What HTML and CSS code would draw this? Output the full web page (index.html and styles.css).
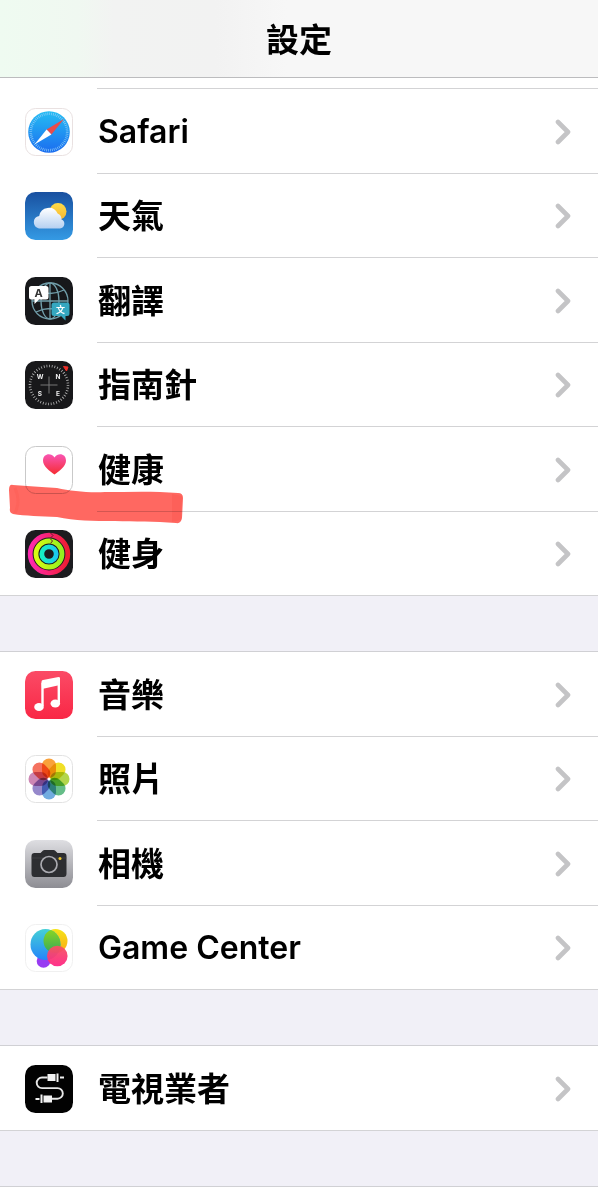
FILE: index.html
```html
<!DOCTYPE html>
<html lang="zh-Hant">
<head>
    <meta charset="UTF-8">
    <meta name="viewport" content="width=device-width, initial-scale=1.0">
    <title>設定</title>
    <link rel="stylesheet" href="styles.css">
</head>
<body>
    <svg class="defs" aria-hidden="true">
        <symbol id="chevron" viewBox="0 0 16 26">
            <path d="M3 3L13 13L3 23" fill="none" stroke="#c4c4c6" stroke-width="4.6" stroke-linecap="round" stroke-linejoin="round"/>
        </symbol>
    </svg>
    <header class="navbar">
        <h1>設定</h1>
    </header>
    <main>
        <div class="group scrolled">
            <div class="tail"></div>
            <ul>
                <li><a class="row" href="#safari">
                    <svg class="icon" viewBox="0 0 48 48" aria-hidden="true">
                        <defs><linearGradient id="safariBlue" x2="0" y2="1"><stop stop-color="#25bdf3"/><stop offset="1" stop-color="#1b6cf0"/></linearGradient></defs>
                        <rect x=".5" y=".5" width="47" height="47" rx="10" fill="#fff" stroke="#e9e1e1"/>
                        <circle cx="24" cy="24" r="20.8" fill="url(#safariBlue)"/>
                        <circle cx="24" cy="24" r="18.2" fill="none" stroke="#8dcdf7" stroke-width="2.6" stroke-dasharray=".7 1.2"/>
                        <path d="M39 11L26.4 26.4L21.6 21.6Z" fill="#e94b4b"/>
                        <path d="M9.5 36.5L26.4 26.4L21.6 21.6Z" fill="#fff"/>
                    </svg>
                    <span class="label latin">Safari</span>
                    <svg class="chevron" aria-hidden="true"><use href="#chevron"/></svg>
                </a></li>
                <li><a class="row" href="#weather">
                    <svg class="icon" viewBox="0 0 48 48" aria-hidden="true">
                        <defs>
                            <linearGradient id="sky" x2="0" y2="1"><stop stop-color="#1950a0"/><stop offset="1" stop-color="#349ae4"/></linearGradient>
                            <linearGradient id="cloud" x2="0" y2="1"><stop stop-color="#fff"/><stop offset="1" stop-color="#b5d0f1"/></linearGradient>
                            <linearGradient id="sun" x2="0" y2="1"><stop stop-color="#ffdc48"/><stop offset="1" stop-color="#f7b631"/></linearGradient>
                        </defs>
                        <rect width="48" height="48" rx="10.5" fill="url(#sky)"/>
                        <circle cx="33" cy="19.5" r="8.5" fill="url(#sun)"/>
                        <path d="M14 36.5a6.4 6.4 0 0 1 .2-12.6a9.7 9.7 0 0 1 18.4-2.3a6.2 6.2 0 0 1 3.9 5.9a4.7 4.7 0 0 1-1.5 9Z" fill="url(#cloud)"/>
                    </svg>
                    <span class="label">天氣</span>
                    <svg class="chevron" aria-hidden="true"><use href="#chevron"/></svg>
                </a></li>
                <li><a class="row" href="#translate">
                    <svg class="icon" viewBox="0 0 48 48" aria-hidden="true">
                        <rect width="48" height="48" rx="10.5" fill="#17181b"/>
                        <g fill="none" stroke="#709da9" stroke-width="1.3">
                            <circle cx="25" cy="24" r="18"/>
                            <ellipse cx="25" cy="24" rx="9" ry="18"/>
                            <path d="M25 6V42M7 24H43M11 13Q25 20 39 13M11 35Q25 28 39 35"/>
                        </g>
                        <path d="M6.5 9H21a2.500 2.500 0 0 1 2.500 2.500V20a2.500 2.500 0 0 1-2.500 2.500H14L9.500 27V22.500H6.500A2.500 2.500 0 0 1 4 20V11.500A2.500 2.500 0 0 1 6.500 9Z" fill="#fff"/>
                        <path d="M29 25.500H42a2.500 2.500 0 0 1 2.500 2.500V36.500a2.500 2.500 0 0 1-2.500 2.500H40.500V43.500L36 39H29a2.500 2.500 0 0 1-2.500-2.500V28a2.500 2.500 0 0 1 2.500-2.500Z" fill="#35a7c0"/>
                        <text class="glyph" x="13.5" y="19.8" font-size="11" fill="#333">A</text>
                        <text class="glyph" x="35.5" y="35.8" font-size="9" fill="#fff">文</text>
                    </svg>
                    <span class="label">翻譯</span>
                    <svg class="chevron" aria-hidden="true"><use href="#chevron"/></svg>
                </a></li>
                <li><a class="row" href="#compass">
                    <svg class="icon" viewBox="0 0 48 48" aria-hidden="true">
                        <rect width="48" height="48" rx="10.5" fill="#18181a"/>
                        <circle cx="24" cy="24" r="19" fill="none" stroke="#b5b5b5" stroke-width="2.6" stroke-dasharray=".8 1.9"/>
                        <path d="M24 15.5V32.5M15.5 24H32.5" stroke="#777" stroke-width="1"/>
                        <path d="M38.5 5.5L43 6L41.5 10Z" fill="#f02e28" stroke="#f02e28"/>
                        <g class="glyph" font-size="6.5" fill="#eee">
                            <text x="15" y="17.5">W</text><text x="33" y="17.5">N</text>
                            <text x="15" y="35">S</text><text x="33" y="35">E</text>
                        </g>
                    </svg>
                    <span class="label">指南針</span>
                    <svg class="chevron" aria-hidden="true"><use href="#chevron"/></svg>
                </a></li>
                <li><a class="row" href="#health">
                    <svg class="icon" viewBox="0 0 48 48" aria-hidden="true">
                        <defs><linearGradient id="heart" x2="0" y2="1"><stop stop-color="#f955b3"/><stop offset="1" stop-color="#f62c32"/></linearGradient></defs>
                        <rect x=".5" y=".5" width="47" height="47" rx="10" fill="#fff" stroke="#c9c9c9"/>
                        <path d="M29.5 28.5C25 25 18 20.5 18 14.700C18 7.5 26 6.3 29.5 11.4C33 6.3 41 7.5 41 14.7C41 20.5 34 25 29.5 28.5Z" fill="url(#heart)"/>
                    </svg>
                    <span class="label">健康</span>
                    <svg class="chevron" aria-hidden="true"><use href="#chevron"/></svg>
                </a>
                    <svg class="marker" viewBox="0 0 174 42" aria-hidden="true">
                        <path d="M4 1C18 2 32 3 48 4C62 7 80 9 96 8C120 8 145 7 169 9Q174 9 174 14L173 34Q172 40 167 39C145 37 126 38 106 37C84 37 66 37 48 33C32 32 16 32 4 30Q0 29 1 24L0 6Q0 0 4 1Z" fill="#ff6861"/>
                        <path d="M163 10L173 12L172 36L163 38Z" fill="#f94e48" opacity=".3"/>
                        <path d="M6 4Q12 17 6 29" fill="none" stroke="#f94e48" stroke-width="3" opacity=".2"/>
                    </svg>
                </li>
                <li><a class="row" href="#fitness">
                    <svg class="icon" viewBox="0 0 48 48" aria-hidden="true">
                        <defs>
                            <linearGradient id="move"><stop stop-color="#ff28b0"/><stop offset="1" stop-color="#ee1d32"/></linearGradient>
                            <linearGradient id="exercise"><stop stop-color="#d8fb13"/><stop offset="1" stop-color="#93ef20"/></linearGradient>
                            <linearGradient id="stand"><stop stop-color="#16efc4"/><stop offset="1" stop-color="#1cc9ef"/></linearGradient>
                        </defs>
                        <rect width="48" height="48" rx="10.5" fill="#1c1c1f"/>
                        <g fill="none" stroke-width="4.8">
                            <circle cx="24" cy="24" r="18.8" stroke="url(#move)"/>
                            <circle cx="24" cy="24" r="13" stroke="url(#exercise)"/>
                            <circle cx="24" cy="24" r="7.2" stroke="url(#stand)"/>
                        </g>
                        <path d="M25.5 3L28 5.5L25.5 8M25.5 9L27.5 11L25.5 13.5" fill="none" stroke="#641a2a"/>
                    </svg>
                    <span class="label">健身</span>
                    <svg class="chevron" aria-hidden="true"><use href="#chevron"/></svg>
                </a></li>
            </ul>
        </div>
        <div class="group">
            <ul>
                <li><a class="row" href="#music">
                    <svg class="icon" viewBox="0 0 48 48" aria-hidden="true">
                        <defs><linearGradient id="music" x2="0" y2="1"><stop stop-color="#fb4b66"/><stop offset="1" stop-color="#f92745"/></linearGradient></defs>
                        <rect width="48" height="48" rx="10.5" fill="url(#music)"/>
                        <path d="M17.5 35V12.5L33.8 9V31.5" fill="none" stroke="#fff" stroke-width="2.4" stroke-linejoin="round"/>
                        <path d="M16.500 10.700Q16.500 9.300 18 9L33.500 6Q35 6 35 7V14L17 18Z" fill="#fff"/>
                        <ellipse cx="14" cy="36" rx="4.800" ry="4" fill="#fff"/>
                        <ellipse cx="30.300" cy="32.500" rx="4.800" ry="4" fill="#fff"/>
                    </svg>
                    <span class="label">音樂</span>
                    <svg class="chevron" aria-hidden="true"><use href="#chevron"/></svg>
                </a></li>
                <li><a class="row" href="#photos">
                    <svg class="icon" viewBox="0 0 48 48" aria-hidden="true">
                        <rect x=".5" y=".5" width="47" height="47" rx="10" fill="#fff" stroke="#e2e2e2"/>
                        <g class="petals">
                            <rect x="17" y="3.5" width="14" height="19.5" rx="7" fill="#f9a13a"/>
                            <rect x="17" y="3.5" width="14" height="19.5" rx="7" fill="#f0df27" transform="rotate(45 24 24)"/>
                            <rect x="17" y="3.5" width="14" height="19.5" rx="7" fill="#b3d64c" transform="rotate(90 24 24)"/>
                            <rect x="17" y="3.5" width="14" height="19.5" rx="7" fill="#65bd88" transform="rotate(135 24 24)"/>
                            <rect x="17" y="3.5" width="14" height="19.5" rx="7" fill="#72ace0" transform="rotate(180 24 24)"/>
                            <rect x="17" y="3.5" width="14" height="19.5" rx="7" fill="#9688cb" transform="rotate(225 24 24)"/>
                            <rect x="17" y="3.5" width="14" height="19.5" rx="7" fill="#cd86b4" transform="rotate(270 24 24)"/>
                            <rect x="17" y="3.5" width="14" height="19.5" rx="7" fill="#f47260" transform="rotate(315 24 24)"/>
                        </g>
                        <circle cx="24" cy="24" r="1.5" fill="#fff"/>
                    </svg>
                    <span class="label">照片</span>
                    <svg class="chevron" aria-hidden="true"><use href="#chevron"/></svg>
                </a></li>
                <li><a class="row" href="#camera">
                    <svg class="icon" viewBox="0 0 48 48" aria-hidden="true">
                        <defs><linearGradient id="metal" x2="0" y2="1"><stop stop-color="#dedee2"/><stop offset="1" stop-color="#8d8d93"/></linearGradient></defs>
                        <rect width="48" height="48" rx="10.5" fill="url(#metal)"/>
                        <path d="M9.5 13H15.5L18 10.5Q18.5 10 19.5 10H28.5Q29.5 10 30 10.5L32.5 13H38.5Q41.5 13 41.5 16V33.5Q41.5 37 38.5 37H9.5Q6.5 37 6.5 33.5V16Q6.5 13 9.5 13Z" fill="#2d2e31"/>
                        <path d="M6.5 18H41.5" stroke="#4b4c4f" stroke-width=".6"/>
                        <circle cx="24" cy="24.5" r="8" fill="#2d2e31" stroke="#aaaab0" stroke-width="1.7"/>
                        <circle cx="35" cy="18.5" r="1.5" fill="#efc72c"/>
                    </svg>
                    <span class="label">相機</span>
                    <svg class="chevron" aria-hidden="true"><use href="#chevron"/></svg>
                </a></li>
                <li><a class="row" href="#game-center">
                    <svg class="icon" viewBox="0 0 48 48" aria-hidden="true">
                        <defs>
                            <linearGradient id="bubbleBlue" x2="0" y2="1"><stop stop-color="#45d0d6"/><stop offset="1" stop-color="#2485fb"/></linearGradient>
                            <linearGradient id="bubbleYellow" x2="0" y2="1"><stop stop-color="#f5e418"/><stop offset="1" stop-color="#fba916"/></linearGradient>
                            <linearGradient id="bubbleGreen" x2="0" y2="1"><stop stop-color="#8bd621"/><stop offset="1" stop-color="#35ab5a"/></linearGradient>
                            <linearGradient id="bubblePink" x2="0" y2="1"><stop stop-color="#f45561"/><stop offset="1" stop-color="#ff2685"/></linearGradient>
                            <clipPath id="inBlue"><ellipse cx="20.5" cy="20.5" rx="15" ry="15.5"/></clipPath>
                        </defs>
                        <rect x=".5" y=".5" width="47" height="47" rx="10" fill="#fff" stroke="#f0f0f0"/>
                        <circle cx="18.5" cy="37" r="6.8" fill="#983bf2"/>
                        <circle cx="30.5" cy="17" r="12" fill="url(#bubbleYellow)"/>
                        <ellipse cx="20.5" cy="20.5" rx="15" ry="15.5" fill="url(#bubbleBlue)"/>
                        <circle cx="30.5" cy="17" r="12" fill="url(#bubbleGreen)" clip-path="url(#inBlue)"/>
                        <circle cx="32.3" cy="32" r="10.3" fill="url(#bubblePink)" opacity=".95"/>
                    </svg>
                    <span class="label latin">Game Center</span>
                    <svg class="chevron" aria-hidden="true"><use href="#chevron"/></svg>
                </a></li>
            </ul>
        </div>
        <div class="group">
            <ul>
                <li><a class="row" href="#tv-provider">
                    <svg class="icon" viewBox="0 0 48 48" aria-hidden="true">
                        <rect width="48" height="48" rx="10.5" fill="#020202"/>
                        <path d="M22.5 12.5H17a5.3 5.3 0 0 0 0 10.6H32.5a5.3 5.3 0 0 1 0 10.6H27" fill="none" stroke="#e8e8e8" stroke-width="1.9"/>
                        <path d="M22.5 9H30.5V16H22.5ZM31.5 8.5H33.5V17H31.5ZM35 11.500H39V13.5H35ZM18.500 30.5H27V37.5H18.5ZM15.5 29.5H17.5V38H15.5ZM10.5 33H14.5V35H10.5Z" fill="#f2f2f2"/>
                    </svg>
                    <span class="label">電視業者</span>
                    <svg class="chevron" aria-hidden="true"><use href="#chevron"/></svg>
                </a></li>
            </ul>
        </div>
        <div class="group next"></div>
    </main>
</body>
</html>
```
FILE: styles.css
```css
* {
    box-sizing: border-box;
}
body {
    display: flex;
    flex-direction: column;
    min-height: 100vh;
    margin: 0;
    background: #f1f0f7;
    color: #000;
    font-family: Inter, "Noto Sans CJK TC", sans-serif;
    font-weight: 600;
}
.defs {
    display: none;
}
.navbar {
    display: flex;
    justify-content: center;
    align-items: center;
    height: 78px;
    padding-top: 2px;
    background: linear-gradient(90deg, #effbf1 0%, #f0f8f1 13%, #f2f3f2 19%, #f2f2f2 36%, #f7f7f7 48%);
    border-bottom: 1px solid #bcbcbe;
}
h1 {
    margin: 0;
    font-size: 33px;
    line-height: 40px;
    font-weight: 600;
}
main {
    display: flex;
    flex-direction: column;
    flex: 1;
    gap: 55px;
}
.group {
    background: #fff;
    border-top: 1px solid #d0d0d4;
}
.group.scrolled {
    border-top: none;
}
.group.next {
    flex: 1;
}
/* bottom edge of the row hidden under the navbar */
.tail {
    height: 11px;
    margin-left: 97px;
    border-bottom: 1px solid #d3d3d5;
}
ul {
    margin: 0;
    padding: 0;
    list-style: none;
}
li {
    position: relative;
}
.row {
    display: grid;
    grid-template-columns: 48px 1fr 16px;
    column-gap: 25px;
    align-items: center;
    min-height: 85px;
    padding: 0 27px 0 25px;
    color: inherit;
    text-decoration: none;
    background: linear-gradient(#d3d3d5, #d3d3d5) 97px 100% / 100% 1px no-repeat;
}
li:nth-child(even) .row {
    min-height: 84px;
}
li:last-child .row {
    background-position: 0 100%;
}
.icon {
    width: 48px;
    height: 48px;
}
.label {
    font-size: 33px;
    line-height: 40px;
}
.label.latin {
    font-size: 32px;
}
.chevron {
    width: 16px;
    height: 26px;
}
.glyph {
    font-weight: 700;
    text-anchor: middle;
}
.petals rect {
    mix-blend-mode: multiply;
}
/* highlighter stroke drawn over the row's lower edge */
.marker {
    position: absolute;
    left: 9px;
    top: 57px;
    z-index: 1;
    width: 174px;
    height: 42px;
    mix-blend-mode: multiply;
    pointer-events: none;
}
```
